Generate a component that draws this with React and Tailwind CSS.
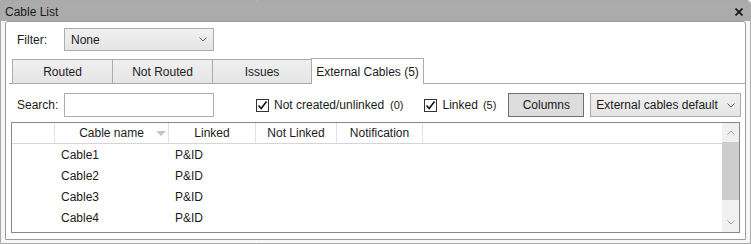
import React from "react";

const Chevron = ({ up = false, color = "#606060" }) => (
  <svg width="8" height="5" viewBox="0 0 8 5" className="block shrink-0">
    <path
      d={up ? "M0.5 4.5 L4 1 L7.5 4.5" : "M0.5 0.5 L4 4 L7.5 0.5"}
      fill="none"
      stroke={color}
      strokeWidth="1"
    />
  </svg>
);

const Check = () => (
  <div className="w-[13px] h-[13px] shrink-0 border border-[#333333] bg-white flex items-center justify-center">
    <svg width="11" height="11" viewBox="0 0 11 11">
      <path d="M1.5 5.5 L4.2 8.5 L9.5 1.5" fill="none" stroke="#111" strokeWidth="1.6" />
    </svg>
  </div>
);

export default function App() {
  const tabs = [
    { label: "Routed", w: "w-[101px]" },
    { label: "Not Routed", w: "w-[101px]" },
    { label: "Issues", w: "w-[100px]" },
  ];
  const rows = ["Cable1", "Cable2", "Cable3", "Cable4"];
  return (
    <div
      className="w-[751px] h-[244px] text-[12px] text-[#1b1b1b] bg-white whitespace-nowrap"
      style={{ fontFamily: '"Liberation Sans", Arial, sans-serif' }}
    >
      <div className="w-[751px] h-[244px] border border-[#a9a9a9] rounded-tr-[4px] bg-[#f7f7f7] flex flex-col">
        {/* Title bar */}
        <div className="h-[20px] shrink-0 bg-[#ababab] flex items-center justify-between pl-[4px] pr-[7px] pt-[1px] rounded-tr-[3px]">
          <span className="leading-none">Cable List</span>
          <svg width="8" height="8" viewBox="0 0 8 8">
            <path d="M0.5 0.5 L7.5 7.5 M7.5 0.5 L0.5 7.5" stroke="#111" strokeWidth="1.6" />
          </svg>
        </div>
        {/* Panel */}
        <div className="flex-1 min-h-0 mx-[4px] mb-[3px] border border-[#9c9c9c] rounded-t-[3px] bg-white flex flex-col pt-[6px] pb-[6px]">
          {/* Filter row */}
          <div className="flex items-center h-[23px] shrink-0 pl-[11px]">
            <span className="w-[47px] shrink-0">Filter:</span>
            <div className="w-[150px] h-[23px] shrink-0 border border-[#acacac] bg-gradient-to-b from-[#f0f0f0] to-[#e5e5e5] flex items-center justify-between pl-[6px] pr-[6px]">
              <span>None</span>
              <Chevron />
            </div>
          </div>
          {/* Tabs */}
          <div className="mt-[7px] ml-[3px] h-[26px] shrink-0 border-b border-[#acacac] flex items-end pl-[3px]">
            {tabs.map((t, i) => (
              <div
                key={t.label}
                className={`${t.w} h-[24px] shrink-0 border border-b-0 border-[#acacac] bg-gradient-to-b from-[#f0f0f0] to-[#e5e5e5] flex items-center justify-center ${i > 0 ? "-ml-px" : ""}`}
              >
                {t.label}
              </div>
            ))}
            <div className="w-[113px] h-[26px] shrink-0 -ml-px -mb-px border border-b-0 border-[#acacac] bg-white flex items-center justify-center">
              External Cables (5)
            </div>
          </div>
          {/* Search row */}
          <div className="mt-[9px] flex items-center h-[24px] shrink-0 pl-[11px] pr-[5px]">
            <span className="w-[47px] shrink-0">Search:</span>
            <div className="w-[150px] h-[24px] shrink-0 border border-[#abadb3] bg-white" />
            <div className="ml-[42px] flex items-center shrink-0">
              <Check />
              <span className="ml-[5px]">Not created/unlinked</span>
              <span className="ml-[6px] text-[11px]">(0)</span>
            </div>
            <div className="ml-[20px] flex items-center shrink-0">
              <Check />
              <span className="ml-[6px]">Linked</span>
              <span className="ml-[5px] text-[11px]">(5)</span>
            </div>
            <div className="ml-[12px] w-[76px] h-[24px] shrink-0 border border-[#707070] bg-[#dddddd] flex items-center justify-center">
              Columns
            </div>
            <div className="ml-[6px] w-[151px] h-[24px] shrink-0 border border-[#acacac] bg-gradient-to-b from-[#f0f0f0] to-[#e5e5e5] flex items-center justify-between pl-[5px] pr-[5px]">
              <span>External cables default</span>
              <Chevron />
            </div>
          </div>
          {/* Table */}
          <div className="mt-[5px] mx-[5px] flex-1 border border-[#828790] flex min-h-0">
            <div className="flex-1 flex flex-col">
              <div className="h-[21px] flex border-b border-[#d5d5d5]">
                <div className="w-[43px] shrink-0 border-r border-[#e3e3e3]" />
                <div className="w-[114px] shrink-0 border-r border-[#e3e3e3] relative flex items-center justify-center">
                  <span>Cable name</span>
                  <svg width="10" height="6" viewBox="0 0 10 6" className="absolute right-[2px] top-[8px]">
                    <path d="M0 0 L10 0 L5 5 Z" fill="#c4c4c4" />
                  </svg>
                </div>
                <div className="w-[87px] shrink-0 border-r border-[#e3e3e3] flex items-center justify-center">Linked</div>
                <div className="w-[81px] shrink-0 border-r border-[#e3e3e3] flex items-center justify-center">Not Linked</div>
                <div className="w-[86px] shrink-0 border-r border-[#e3e3e3] flex items-center justify-center">Notification</div>
                <div className="flex-1" />
              </div>
              {rows.map((r) => (
                <div key={r} className="h-[21px] flex items-center">
                  <div className="w-[43px] shrink-0" />
                  <div className="w-[114px] shrink-0 pl-[6px]">{r}</div>
                  <div className="w-[87px] shrink-0 pl-[6px]">P&amp;ID</div>
                </div>
              ))}
            </div>
            {/* Scrollbar */}
            <div className="w-[17px] shrink-0 bg-[#f0f0f0] flex flex-col items-center">
              <div className="h-[19px] flex items-center justify-center">
                <Chevron up color="#a6a6a6" />
              </div>
              <div className="w-[17px] h-[58px] bg-[#cdcdcd]" />
              <div className="flex-1" />
              <div className="h-[19px] flex items-center justify-center">
                <Chevron color="#a6a6a6" />
              </div>
            </div>
          </div>
        </div>
      </div>
    </div>
  );
}
